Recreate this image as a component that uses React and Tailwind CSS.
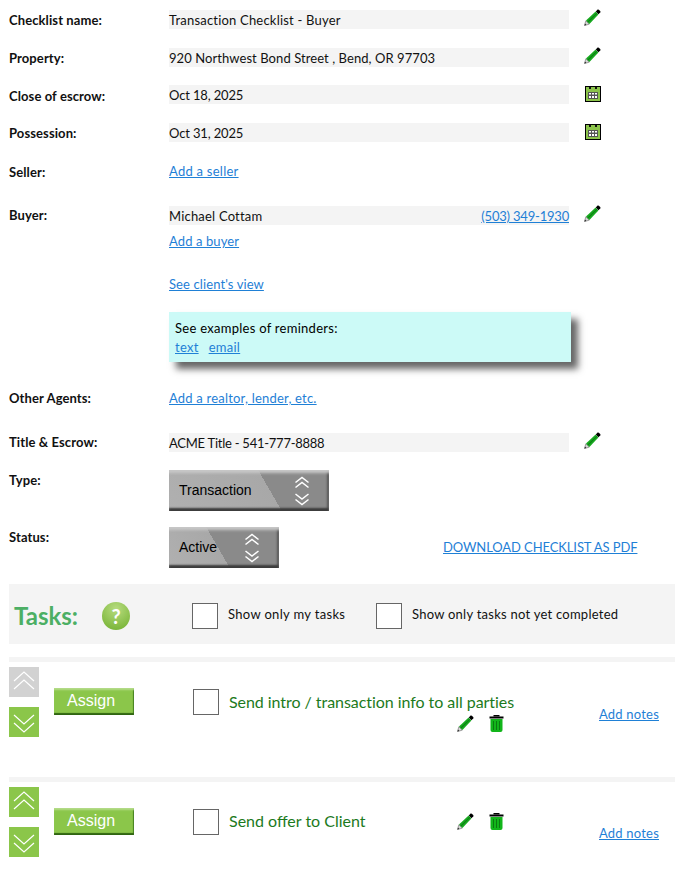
const linkCls = "text-[#1f80d6] underline";

function Pencil({ className }) {
  return (
    <svg className={className} width="17" height="17" viewBox="0 0 17 17">
      {/* tip */}
      <path d="M0.5 16.5 L1.8 11.8 L5.2 15.2 Z" fill="#d8d8d8" stroke="#555" strokeWidth="0.5" />
      <path d="M0.5 16.5 L1 14.6 L2.4 16 Z" fill="#222" />
      {/* body */}
      <path d="M2 11.5 L11.6 2.6 L14.4 5.4 L5.4 15 Z" fill="#17a81f" />
      <path d="M3.4 12.8 L12.6 4 L13.2 4.6 L4.2 13.6 Z" fill="#0b7d12" />
      {/* eraser */}
      <path d="M11.8 2.4 L13.6 0.6 Q14.2 0.2 14.8 0.7 L16.2 2.1 Q16.7 2.7 16.3 3.3 L14.5 5.2 Z" fill="#000" />
    </svg>
  );
}

function Trash({ className }) {
  return (
    <svg className={className} width="15" height="17" viewBox="0 0 15 17">
      <rect x="4.5" y="0" width="6" height="1.5" fill="#000" />
      <rect x="0.5" y="1.5" width="14" height="2" fill="#000" />
      <path d="M1.5 4 H13.5 V15 Q13.5 17 11.5 17 H3.5 Q1.5 17 1.5 15 Z" fill="#12b51a" />
      <path d="M4.5 6 V15 M7.5 6 V15 M10.5 6 V15" stroke="#0a7a10" strokeWidth="1" />
    </svg>
  );
}

function Calendar() {
  return (
    <svg width="16" height="16" viewBox="0 0 16 16">
      <rect x="0.5" y="0.5" width="15" height="15" fill="#8bc34a" stroke="#000" />
      <rect x="4" y="1" width="2" height="2" fill="#111" />
      <rect x="10" y="1" width="2" height="2" fill="#111" />
      <rect x="3" y="6" width="10" height="7" fill="#555" />
      <path d="M4 7 H6 V8.6 H4 Z M7 7 H9 V8.6 H7 Z M10 7 H12 V8.6 H10 Z M4 10 H6 V12 H4 Z M7 10 H9 V12 H7 Z M10 10 H12 V12 H10 Z" fill="#fff" />
    </svg>
  );
}

function Chevrons({ up, color = "#fff", size = 30 }) {
  const d = up
    ? "M5 14 L15 5 L25 14 M5 22 L15 13 L25 22"
    : "M5 8 L15 17 L25 8 M5 16 L15 25 L25 16";
  return (
    <svg width={size} height={size} viewBox="0 0 30 30">
      <path d={d} fill="none" stroke={color} strokeWidth="1.2" />
    </svg>
  );
}

// label + field row in the top form
function Row({ label, className, children, icon, labelCls = "leading-[21px]" }) {
  return (
    <div className={`flex ${className}`}>
      <div className={`w-[160px] h-[19px] shrink-0 font-bold text-[13px] text-[#111] tracking-[0.1px] ${labelCls}`}>{label}</div>
      <div className="w-[400px] shrink-0">{children}</div>
      {icon && <div className="ml-[15px] -mt-[1px]">{icon}</div>}
    </div>
  );
}

function Field({ children, className }) {
  return <div className={`bg-[#f4f4f4] h-[19px] leading-[21px] flex justify-between ${className}`}>{children}</div>;
}

function SelectBox({ label, width, split }) {
  return (
    <div
      className={`${width} ${split} h-[41px] flex items-center justify-between pl-[10px] pr-[19px] text-[14px] text-black shadow-[inset_0_4px_3px_-1px_#c8c8c8,inset_0_-4px_2px_-1px_#3c3c3c,inset_-3px_0_2px_-1px_#555]`}
      style={{ fontFamily: '"Liberation Sans", Arial, sans-serif' }}
    >
      {label}
      <svg width="16" height="30" viewBox="0 0 16 30">
        <path d="M1.5 6.5 L8 1.5 L14.5 6.5 M1.5 11.5 L8 6.5 L14.5 11.5" fill="none" stroke="#fff" strokeWidth="1.5" />
        <path d="M1.5 18 L8 23 L14.5 18 M1.5 23.5 L8 28.5 L14.5 23.5" fill="none" stroke="#fff" strokeWidth="1.5" />
      </svg>
    </div>
  );
}

function Box({ className }) {
  return <div className={`w-[26px] h-[26px] border border-[#666] bg-white shrink-0 ${className}`} />;
}

function TaskRow({ title, upActive, iconsBelow, className }) {
  return (
    <div className={`flex ${className}`}>
      <div className="w-[30px] flex flex-col gap-[10px] shrink-0">
        <div className={upActive ? "bg-[#8bc64a] h-[30px]" : "bg-[#d2d2d2] h-[30px]"}>
          <Chevrons up />
        </div>
        <div className="bg-[#8bc64a] h-[30px]">
          <Chevrons />
        </div>
      </div>
      <div
        className="ml-[15px] mt-[21px] w-[80px] h-[27px] bg-[#8bc64a] text-white text-[16px] leading-[26px] pl-[13px] shadow-[inset_0_3px_2px_-1px_#b5dc8a,inset_0_-3px_1px_-1px_#2f6410,inset_-2px_0_1px_-1px_#3f7a1a]"
        style={{ fontFamily: '"Liberation Sans", Arial, sans-serif' }}
      >
        Assign
      </div>
      <Box className="ml-[59px] mt-[22px]" />
      {iconsBelow ? (
        <div className="ml-[10px] w-[370px] mt-[25px] shrink-0">
          <div className="text-[#1c7a1c] text-[16px] leading-[20px] tracking-[-0.05px]">{title}</div>
          <div className="flex gap-[15px] ml-[228px] mt-[3px]">
            <Pencil />
            <Trash />
          </div>
        </div>
      ) : (
        <div className="ml-[10px] w-[370px] mt-[24px] shrink-0 flex">
          <div className="text-[#1c7a1c] text-[16px] leading-[20px] w-[228px]">{title}</div>
          <div className="flex gap-[15px] mt-[2px]">
            <Pencil />
            <Trash />
          </div>
        </div>
      )}
      <a className={`${linkCls} ${iconsBelow ? "mt-[37px]" : "mt-[36px]"} text-[13px] leading-[20px] tracking-[0.2px]`}>Add notes</a>
    </div>
  );
}

export default function App() {
  return (
    <div className="w-[675px] h-[876px] overflow-hidden bg-white pl-[9px] pt-[10px] text-[13px] text-[#111]" style={{ fontFamily: 'Lato, "Open Sans", sans-serif' }}>
      <Row label="Checklist name:" icon={<Pencil />}>
        <Field className="tracking-[0.2px]">Transaction Checklist - Buyer</Field>
      </Row>
      <Row label="Property:" className="mt-[19px]" icon={<Pencil />}>
        <Field className="tracking-[0.07px]">920 Northwest Bond Street , Bend, OR 97703</Field>
      </Row>
      <Row label="Close of escrow:" className="mt-[18px]" labelCls="leading-[23px]" icon={<div className="ml-[1px] mt-[2px]"><Calendar /></div>}>
        <Field className="tracking-[-0.15px]">Oct 18, 2025</Field>
      </Row>
      <Row label="Possession:" className="mt-[19px]" icon={<div className="ml-[1px] mt-[2px]"><Calendar /></div>}>
        <Field className="tracking-[-0.15px]">Oct 31, 2025</Field>
      </Row>
      <Row label="Seller:" className="mt-[20px]">
        <a className={`${linkCls} leading-[19px] block tracking-[0.25px]`}>Add a seller</a>
      </Row>
      <Row label="Buyer:" labelCls="leading-[19px]" className="mt-[25px]" icon={<Pencil />}>
        <Field>
          <span className="tracking-[0.2px]">Michael Cottam</span>
          <a className={`${linkCls} tracking-[-0.2px]`}>(503) 349-1930</a>
        </Field>
        <a className={`${linkCls} block mt-[7px] leading-[19px] tracking-[0.1px]`}>Add a buyer</a>
        <a className={`${linkCls} block mt-[24px] leading-[19px] tracking-[0.1px]`}>See client's view</a>
        <div className="mt-[18px] w-[402px] h-[50px] bg-[#ccfaf7] pl-[6px] pt-[7px] leading-[19px] text-black tracking-[0.27px] shadow-[7px_7px_7px_#666]">
          <div>See examples of reminders:</div>
          <div className="flex gap-[10px]">
            <a className={linkCls}>text</a>
            <a className={linkCls}>email</a>
          </div>
        </div>
      </Row>
      <Row label="Other Agents:" labelCls="leading-[19px]" className="mt-[27px]">
        <a className={`${linkCls} block leading-[19px] tracking-[0.2px]`}>Add a realtor, lender, etc.</a>
      </Row>
      <Row label="Title & Escrow:" labelCls="leading-[19px]" className="mt-[25px]" icon={<Pencil />}>
        <Field className="tracking-[-0.25px]">ACME Title - 541-777-8888</Field>
      </Row>
      <Row label="Type:" className="mt-[18px]">
        <SelectBox label="Transaction" width="w-[160px]" split="bg-[linear-gradient(60deg,#b0b0b0_0%,#a8a8a8_61.4%,#8a8a8a_61.4%,#8a8a8a_100%)]" />
      </Row>
      <div className="flex mt-[16px]">
        <div className="w-[160px] h-[19px] shrink-0 font-bold leading-[21px] tracking-[0.1px]">Status:</div>
        <SelectBox label="Active" width="w-[110px]" split="bg-[linear-gradient(60deg,#b0b0b0_0%,#a8a8a8_45.5%,#8a8a8a_45.5%,#8a8a8a_100%)]" />
        <a className={`${linkCls} ml-[164px] mt-[11px] leading-[19px] tracking-[-0.1px]`}>DOWNLOAD CHECKLIST AS PDF</a>
      </div>
      <div className="mt-[16px] h-[60px] bg-[#f4f4f4] flex items-center pt-[4px]">
        <div className="ml-[5px] w-[65px] text-[24px] font-bold text-[#4caf64]">Tasks:</div>
        <div className="ml-[23px] w-[28px] h-[28px] rounded-full bg-[radial-gradient(circle_at_50%_25%,#b7dc7f,#6fae2c)] text-white font-bold text-[20px] leading-[28px] text-center">?</div>
        <Box className="ml-[62px]" />
        <span className="ml-[10px] w-[148px] -mt-[2px] tracking-[0.33px]">Show only my tasks</span>
        <Box />
        <span className="ml-[10px] -mt-[2px] tracking-[0.25px]">Show only tasks not yet completed</span>
      </div>
      <div className="mt-[13px] h-[5px] bg-[#f4f4f4]" />
      <TaskRow className="mt-[5px]" title="Send intro / transaction info to all parties" iconsBelow />
      <div className="mt-[40px] h-[5px] bg-[#f4f4f4]" />
      <TaskRow className="mt-[5px]" title="Send offer to Client" upActive />
    </div>
  );
}
